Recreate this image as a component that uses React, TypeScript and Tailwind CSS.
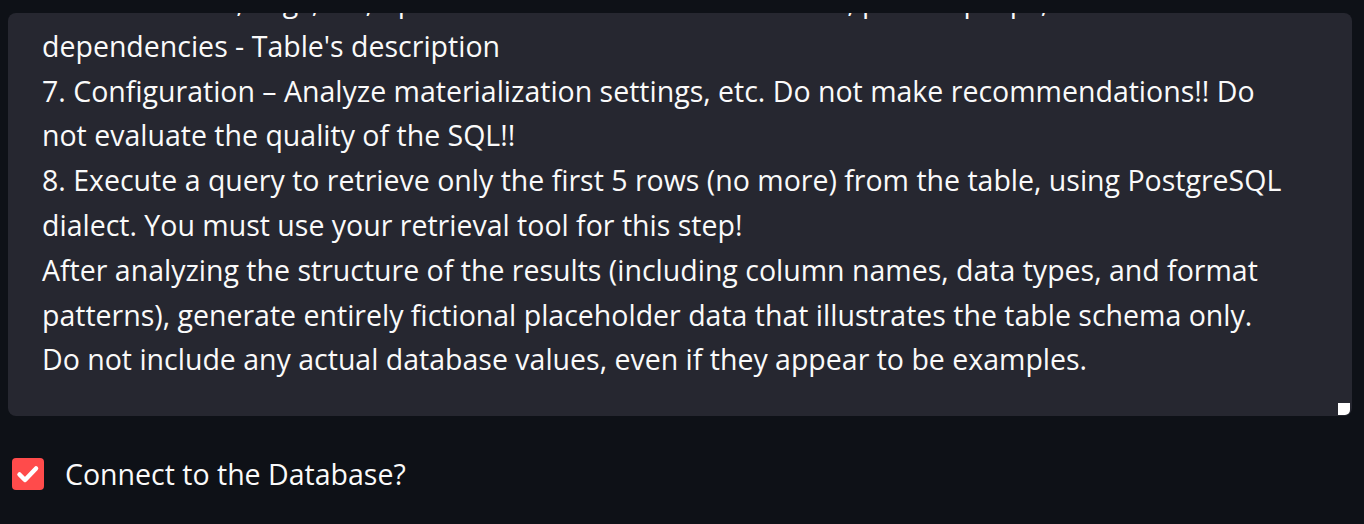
const lines = [
  '6. Docs – Tests, Tags, Ids, upstream and downstream models, plus its props, and other attributes',
  "dependencies - Table's description",
  '7. Configuration – Analyze materialization settings, etc. Do not make recommendations!! Do',
  'not evaluate the quality of the SQL!!',
  '8. Execute a query to retrieve only the first 5 rows (no more) from the table, using PostgreSQL',
  'dialect. You must use your retrieval tool for this step!',
  'After analyzing the structure of the results (including column names, data types, and format',
  'patterns), generate entirely fictional placeholder data that illustrates the table schema only.',
  'Do not include any actual database values, even if they appear to be examples.',
];

function CheckIcon() {
  return (
    <svg viewBox="0 0 32 32" className="w-8 h-8">
      <rect width="32" height="32" rx="4" fill="#ff4b4b" />
      <path d="M7.5 16.5l5.5 5.5 11-11.5" fill="none" stroke="#fff" strokeWidth="4.5" strokeLinecap="round" strokeLinejoin="round" />
    </svg>
  );
}

export default function App() {
  return (
    <div
      className="w-[1364px] h-[524px] bg-[#0e1117] text-[#fafafa] px-2 pt-[13px] overflow-hidden"
      style={{ fontFamily: '"Open Sans", Lato, sans-serif' }}
    >
      <div className="relative h-[403px] w-[1344px] rounded-lg bg-[#262730] overflow-hidden">
        <div className="mt-[-34px] px-[34px] text-[28.5px] leading-[44.8px]">
          {lines.map((l) => (
            <div key={l} className="whitespace-nowrap">
              {l}
            </div>
          ))}
        </div>
        <div className="absolute right-[2px] bottom-[1px] w-3 h-3 bg-white rounded-br-[5px]" />
      </div>

      <label className="mt-[37px] ml-1 flex items-center gap-[21px] text-[28.5px]">
        <CheckIcon />
        <span>Connect to the Database?</span>
      </label>
    </div>
  );
}
